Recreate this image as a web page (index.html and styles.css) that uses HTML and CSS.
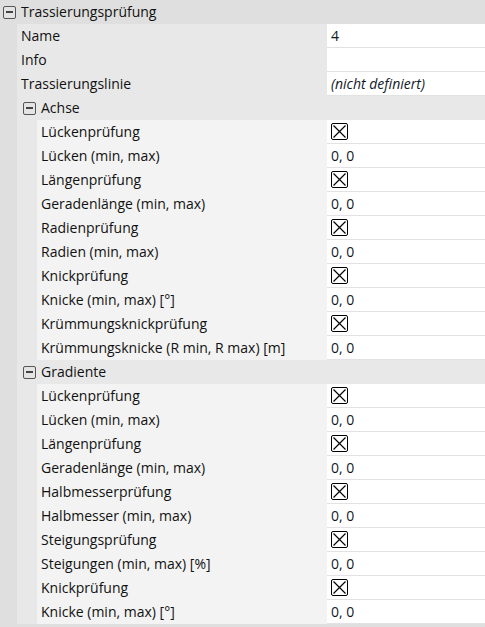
FILE: index.html
```html
<!DOCTYPE html>
<html lang="de">
<head>
  <meta charset="UTF-8">
  <title>Trassierungsprüfung</title>
  <link rel="stylesheet" href="styles.css">
</head>
<body>
  <div class="grid">
    <div class="cat-head top">
      <span class="toggle"></span>
      <span class="cat-title">Trassierungsprüfung</span>
    </div>
    <div class="cat-body">
      <div class="indent"></div>
      <div class="rows">
        <div class="row"><div class="label">Name</div><div class="value">4</div></div>
        <div class="row"><div class="label">Info</div><div class="value"></div></div>
        <div class="row"><div class="label">Trassierungslinie</div><div class="value italic">(nicht definiert)</div></div>

        <div class="cat-head sub">
          <span class="toggle"></span>
          <span class="cat-title">Achse</span>
        </div>
        <div class="cat-body">
          <div class="indent sub-indent"></div>
          <div class="rows sub-rows" id="achse"></div>
        </div>

        <div class="cat-head sub">
          <span class="toggle"></span>
          <span class="cat-title">Gradiente</span>
        </div>
        <div class="cat-body">
          <div class="indent sub-indent"></div>
          <div class="rows sub-rows" id="gradiente"></div>
        </div>
      </div>
    </div>
  </div>

  <script>
    const achse = [
      ['Lückenprüfung', true],
      ['Lücken (min, max)', '0, 0'],
      ['Längenprüfung', true],
      ['Geradenlänge (min, max)', '0, 0'],
      ['Radienprüfung', true],
      ['Radien (min, max)', '0, 0'],
      ['Knickprüfung', true],
      ['Knicke (min, max) [°]', '0, 0'],
      ['Krümmungsknickprüfung', true],
      ['Krümmungsknicke (R min, R max) [m]', '0, 0']
    ];
    const gradiente = [
      ['Lückenprüfung', true],
      ['Lücken (min, max)', '0, 0'],
      ['Längenprüfung', true],
      ['Geradenlänge (min, max)', '0, 0'],
      ['Halbmesserprüfung', true],
      ['Halbmesser (min, max)', '0, 0'],
      ['Steigungsprüfung', true],
      ['Steigungen (min, max) [%]', '0, 0'],
      ['Knickprüfung', true],
      ['Knicke (min, max) [°]', '0, 0']
    ];

    const box = '<svg class="check" width="17" height="17" viewBox="0 0 17 17">' +
      '<rect x="0.5" y="0.5" width="16" height="16" rx="1.5" fill="#fff" stroke="#000"/>' +
      '<path d="M2.5 2.5 L14.5 14.5 M14.5 2.5 L2.5 14.5" stroke="#000" stroke-width="1.2"/></svg>';

    function fill(id, items) {
      const el = document.getElementById(id);
      el.innerHTML = items.map(function (it) {
        const val = it[1] === true ? box : it[1];
        return '<div class="row"><div class="label">' + it[0] + '</div><div class="value">' + val + '</div></div>';
      }).join('');
    }
    fill('achse', achse);
    fill('gradiente', gradiente);
  </script>
</body>
</html>
```

FILE: styles.css
```css
body {
  margin: 0;
  background: #dfdfdf;
  font-family: "Open Sans", "Noto Sans", sans-serif;
  font-size: 14px;
  color: #111;
}
.grid {
  width: 485px;
  padding-bottom: 3px;
}
.cat-head {
  display: flex;
  align-items: center;
  height: 24px;
}
.cat-head.top {
  background: #dfdfdf;
  padding-left: 3px;
}
.cat-head.sub {
  background: #e8e8e8;
  padding-left: 6px;
}
.toggle {
  position: relative;
  box-sizing: border-box;
  width: 13px;
  height: 13px;
  border: 1px solid #555;
  border-radius: 2px;
  background: #e4e4e4;
  margin-right: 5px;
}
.toggle::after {
  content: "";
  position: absolute;
  left: 2px;
  right: 2px;
  top: 4px;
  height: 2px;
  background: #444;
}
.cat-title {
  line-height: 24px;
}
.cat-body {
  display: flex;
}
.indent {
  width: 17px;
  flex: none;
  background: #dfdfdf;
}
.sub-indent {
  width: 20px;
  background: #e8e8e8;
}
.rows {
  flex: 1;
  background: #e8e8e8;
}
.sub-rows {
  background: #f3f3f3;
}
.row {
  display: grid;
  grid-template-columns: 1fr 158px;
  height: 24px;
}
.label {
  padding-left: 4px;
  line-height: 24px;
  white-space: nowrap;
}
.value {
  background: #fff;
  border-bottom: 1px solid #e2e2e2;
  padding-left: 4px;
  line-height: 23px;
  display: flex;
  align-items: center;
  color: #101828;
}
.italic {
  font-style: italic;
}
.check {
  display: block;
}
```
